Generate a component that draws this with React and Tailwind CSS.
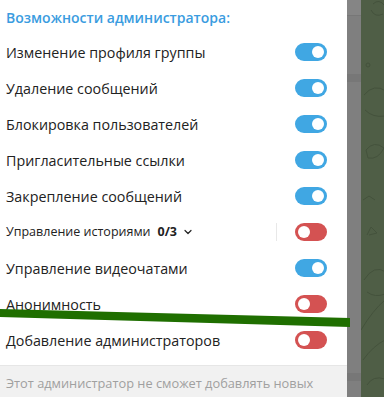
import { ChevronDown } from 'lucide-react';

const rows = [
  { label: 'Изменение профиля группы', on: true },
  { label: 'Удаление сообщений', on: true },
  { label: 'Блокировка пользователей', on: true },
  { label: 'Пригласительные ссылки', on: true },
  { label: 'Закрепление сообщений', on: true },
  { label: 'stories', on: false },
  { label: 'Управление видеочатами', on: true },
  { label: 'Анонимность', on: false },
  { label: 'Добавление администраторов', on: false },
];

function Toggle({ on }) {
  return (
    <div
      className={`w-8 h-[18px] rounded-full flex items-center px-[3px] ${
        on ? 'bg-[#40a7e3] justify-end' : 'bg-[#d45252] justify-start'
      }`}
    >
      <div className="w-3 h-3 rounded-full bg-white" />
    </div>
  );
}

export default function App() {
  return (
    <div className="relative w-[384px] h-[397px] overflow-hidden flex" style={{ fontFamily: "'Open Sans', 'Noto Sans', sans-serif" }}>
      <div className="w-[347px] h-full bg-white flex flex-col">
        <div className="h-[34px] flex items-center px-[6px] text-[14px] font-semibold text-[#3a9ce0]">
          Возможности администратора:
        </div>
        {rows.map((r, i) => (
          <div key={i} className="h-9 flex items-center pl-[6px] pr-5">
            {r.label === 'stories' ? (
              <div className="flex-1 flex items-center text-[12.5px] text-[#222]">
                <span>Управление историями</span>
                <span className="ml-[7px] font-bold">0/3</span>
                <ChevronDown size={12} strokeWidth={2.4} className="ml-[5px]" />
                <div className="ml-auto mr-[18px] w-px h-[18px] bg-[#e8e8e8]" />
              </div>
            ) : (
              <div className="flex-1 text-[14.3px] leading-[22px] pt-px text-[#222]">{r.label}</div>
            )}
            <Toggle on={r.on} />
          </div>
        ))}
        <div className="h-[7px]" />
        <div className="flex-1 bg-[#f1f1f1] border-t border-[#e6e6e6] px-[6px] pt-[8px] text-[12.8px] text-[#a0a0a0] whitespace-nowrap">
          Этот администратор не сможет добавлять новых
        </div>
      </div>
      <div className="w-[14px] h-full bg-[#7f7f7f] flex flex-col">
        <div className="h-4 bg-[#858585] border-b border-[#777]" />
        <div className="h-[58px]" />
        <div className="h-2 bg-[#777]" />
        <div className="flex-1" />
        <div className="h-[8px] bg-[#777] mb-[16px]" />
      </div>
      <div className="flex-1 h-full bg-[#4f5e46]">
        <svg width="23" height="397" viewBox="0 0 23 397" fill="none" stroke="#44523c" strokeWidth="1">
          <path d="M12 4 q6 -6 12 2 M10 10 q4 8 12 4" />
          <circle cx="7" cy="65" r="2" />
          <path d="M3 95 q10 -12 22 -4 M4 110 q8 8 20 6" />
          <path d="M5 150 q8 -10 18 -2 q-6 12 -16 10 z" />
          <path d="M2 200 l6 -4 l6 4" />
          <path d="M6 235 l4 -8 l6 6 l-8 2" />
          <path d="M3 280 q10 -16 22 -8 M6 292 q8 6 18 2" />
          <path d="M0 330 q12 -20 24 -30 M2 360 q10 -14 22 -20" />
          <path d="M6 385 q6 -10 18 -6" />
        </svg>
      </div>
      <svg className="absolute left-0 top-0 pointer-events-none" width="384" height="397">
        <polygon points="0,309 350,318 350,327 0,317" fill="#1f6f00" />
      </svg>
    </div>
  );
}
